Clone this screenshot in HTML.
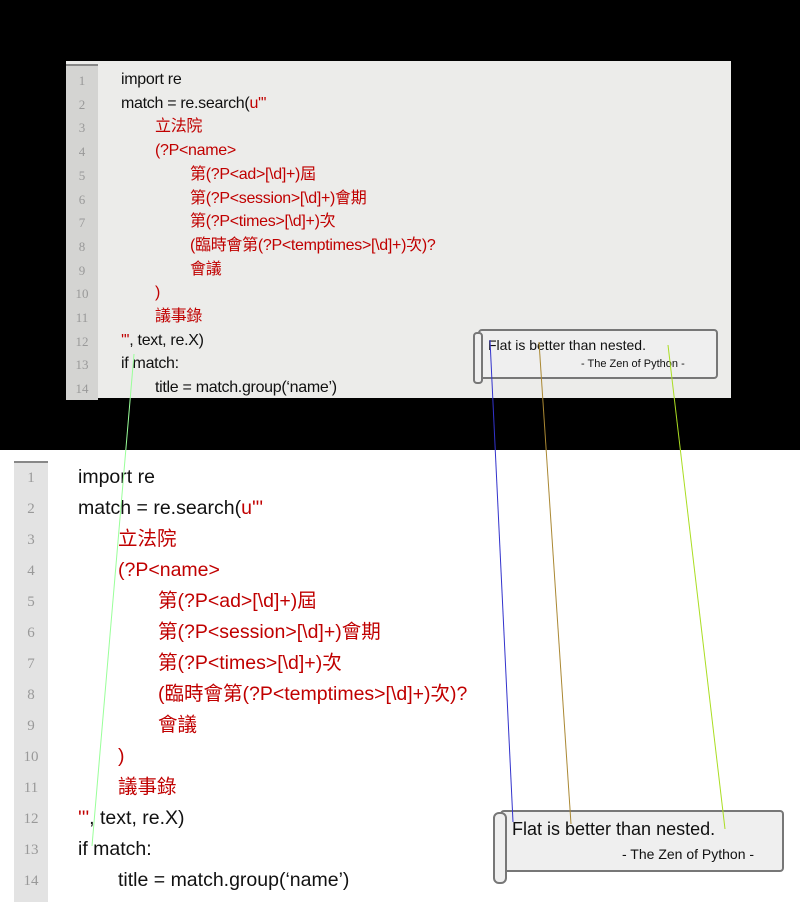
<!DOCTYPE html>
<html><head><meta charset="utf-8"><style>
body{margin:0;width:800px;height:900px;overflow:hidden;background:#fff;font-family:"Liberation Sans","Noto Sans CJK TC",sans-serif;position:relative}
.top{position:absolute;left:0;top:0;width:800px;height:450px;background:#000}
.scr{position:absolute;left:66px;top:61px;width:665px;height:337px;background:#ececea}
.g1{position:absolute;left:66px;top:64px;width:32px;height:334px;background:#d4d4d2;border-top:2px solid #888}
.g2{position:absolute;left:14px;top:461px;width:34px;height:439px;background:#e3e3e3;border-top:2px solid #888}
.l{position:absolute;white-space:nowrap;color:#111;line-height:20px}
.r{color:#c00000}
.n{position:absolute;color:#999;font-family:"Liberation Serif",serif;text-align:center;line-height:20px}
.scroll{position:absolute;background:#efefef;border:2px solid #777;border-radius:4px}
</style></head><body>
<div class="top"></div>
<div class="scr"></div>
<div class="g1"></div>
<div class="g2"></div>
<div id="t"></div>
<div class="scroll" style="left:478px;top:329px;width:236px;height:46px"></div>
<div style="position:absolute;left:473px;top:332px;width:6px;height:48px;border:2px solid #777;border-radius:4px;background:#efefef"></div>
<div class="l" style="left:488px;top:335px;font-size:14px">Flat is better than nested.</div>
<div class="l" style="left:581px;top:354px;font-size:11px">- The Zen of Python -</div>
<div class="scroll" style="left:500px;top:810px;width:280px;height:58px"></div>
<div style="position:absolute;left:493px;top:812px;width:10px;height:68px;border:2px solid #777;border-radius:6px;background:#efefef"></div>
<div class="l" style="left:512px;top:819px;font-size:18px">Flat is better than nested.</div>
<div class="l" style="left:622px;top:844px;font-size:14px">- The Zen of Python -</div>
<svg style="position:absolute;left:0;top:0" width="800" height="900">
<line x1="134" y1="354" x2="92" y2="846" stroke="#9f9" stroke-width="1"/>
<line x1="490" y1="340" x2="513" y2="822" stroke="#33c" stroke-width="1"/>
<line x1="539" y1="342" x2="571" y2="824" stroke="#a83" stroke-width="1"/>
<line x1="668" y1="345" x2="725" y2="829" stroke="#ad2" stroke-width="1"/>
</svg>
<script>
var L=[[0,'import re'],[0,'match = re.search(<span class="r">u\'\'\'</span>'],[1,'<span class="r">立法院</span>'],[1,'<span class="r">(?P&lt;name&gt;</span>'],[2,'<span class="r">第(?P&lt;ad&gt;[\\d]+)屆</span>'],[2,'<span class="r">第(?P&lt;session&gt;[\\d]+)會期</span>'],[2,'<span class="r">第(?P&lt;times&gt;[\\d]+)次</span>'],[2,'<span class="r">(臨時會第(?P&lt;temptimes&gt;[\\d]+)次)?</span>'],[2,'<span class="r">會議</span>'],[1,'<span class="r">)</span>'],[1,'<span class="r">議事錄</span>'],[0,'<span class="r">\'\'\'</span>, text, re.X)'],[0,'if match:'],[1,'title = match.group(‘name’)']];
var h='';
L.forEach(function(a,i){
h+='<div class="n" style="left:66px;width:32px;top:'+(71+i*23.7)+'px;font-size:13px">'+(i+1)+'</div>';
h+='<div class="l" style="left:'+[121,155,190][a[0]]+'px;top:'+(70+i*23.7)+'px;font-size:16px;letter-spacing:-0.3px">'+a[1]+'</div>';
h+='<div class="n" style="left:14px;width:34px;top:'+(468+i*31)+'px;font-size:15px">'+(i+1)+'</div>';
h+='<div class="l" style="left:'+[78,118,158][a[0]]+'px;top:'+(467+i*31)+'px;font-size:19.5px">'+a[1]+'</div>';
});
document.getElementById('t').innerHTML=h;
</script>
</body></html>
